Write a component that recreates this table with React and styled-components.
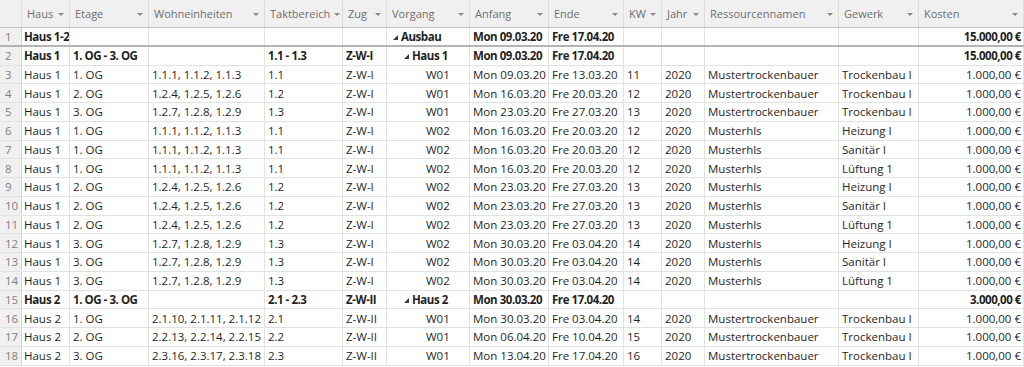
import React from "react";
import styled, { createGlobalStyle, css } from "styled-components";

const GlobalStyle = createGlobalStyle`
  html, body {
    margin: 0;
    padding: 0;
    background: #fff;
    overflow: hidden;
  }
  body {
    font-family: "Open Sans", "Noto Sans", sans-serif;
  }
`;

const COLS = "22px 48px 79px 116px 78px 44px 83px 79px 75px 38px 43px 134px 80px 1fr";

const columns = [
  { key: "haus", title: "Haus", tight: true },
  { key: "etage", title: "Etage" },
  { key: "we", title: "Wohneinheiten" },
  { key: "takt", title: "Taktbereich" },
  { key: "zug", title: "Zug" },
  { key: "vorgang", title: "Vorgang" },
  { key: "anfang", title: "Anfang" },
  { key: "ende", title: "Ende" },
  { key: "kw", title: "KW" },
  { key: "jahr", title: "Jahr" },
  { key: "res", title: "Ressourcennamen" },
  { key: "gewerk", title: "Gewerk" },
  { key: "kosten", title: "Kosten", right: true },
];

const t = (haus, etage, we, takt, zug, nr, anfang, ende, kw, res, gewerk) => ({
  haus, etage, we, takt, zug,
  vorgang: nr, level: 2, anfang, ende, kw, jahr: "2020", res, gewerk,
  kosten: "1.000,00 €",
});

const rows = [
  { bold: true, summary: true, haus: "Haus 1-2", vorgang: "Ausbau", level: 0, group: true, anfang: "Mon 09.03.20", ende: "Fre 17.04.20", kosten: "15.000,00 €" },
  { bold: true, haus: "Haus 1", etage: "1. OG - 3. OG", takt: "1.1 - 1.3", zug: "Z-W-I", vorgang: "Haus 1", level: 1, group: true, anfang: "Mon 09.03.20", ende: "Fre 17.04.20", kosten: "15.000,00 €" },
  t("Haus 1", "1. OG", "1.1.1, 1.1.2, 1.1.3", "1.1", "Z-W-I", "W01", "Mon 09.03.20", "Fre 13.03.20", "11", "Mustertrockenbauer", "Trockenbau I"),
  t("Haus 1", "2. OG", "1.2.4, 1.2.5, 1.2.6", "1.2", "Z-W-I", "W01", "Mon 16.03.20", "Fre 20.03.20", "12", "Mustertrockenbauer", "Trockenbau I"),
  t("Haus 1", "3. OG", "1.2.7, 1.2.8, 1.2.9", "1.3", "Z-W-I", "W01", "Mon 23.03.20", "Fre 27.03.20", "13", "Mustertrockenbauer", "Trockenbau I"),
  t("Haus 1", "1. OG", "1.1.1, 1.1.2, 1.1.3", "1.1", "Z-W-I", "W02", "Mon 16.03.20", "Fre 20.03.20", "12", "Musterhls", "Heizung I"),
  t("Haus 1", "1. OG", "1.1.1, 1.1.2, 1.1.3", "1.1", "Z-W-I", "W02", "Mon 16.03.20", "Fre 20.03.20", "12", "Musterhls", "Sanitär I"),
  t("Haus 1", "1. OG", "1.1.1, 1.1.2, 1.1.3", "1.1", "Z-W-I", "W02", "Mon 16.03.20", "Fre 20.03.20", "12", "Musterhls", "Lüftung 1"),
  t("Haus 1", "2. OG", "1.2.4, 1.2.5, 1.2.6", "1.2", "Z-W-I", "W02", "Mon 23.03.20", "Fre 27.03.20", "13", "Musterhls", "Heizung I"),
  t("Haus 1", "2. OG", "1.2.4, 1.2.5, 1.2.6", "1.2", "Z-W-I", "W02", "Mon 23.03.20", "Fre 27.03.20", "13", "Musterhls", "Sanitär I"),
  t("Haus 1", "2. OG", "1.2.4, 1.2.5, 1.2.6", "1.2", "Z-W-I", "W02", "Mon 23.03.20", "Fre 27.03.20", "13", "Musterhls", "Lüftung 1"),
  t("Haus 1", "3. OG", "1.2.7, 1.2.8, 1.2.9", "1.3", "Z-W-I", "W02", "Mon 30.03.20", "Fre 03.04.20", "14", "Musterhls", "Heizung I"),
  t("Haus 1", "3. OG", "1.2.7, 1.2.8, 1.2.9", "1.3", "Z-W-I", "W02", "Mon 30.03.20", "Fre 03.04.20", "14", "Musterhls", "Sanitär I"),
  t("Haus 1", "3. OG", "1.2.7, 1.2.8, 1.2.9", "1.3", "Z-W-I", "W02", "Mon 30.03.20", "Fre 03.04.20", "14", "Musterhls", "Lüftung 1"),
  { bold: true, haus: "Haus 2", etage: "1. OG - 3. OG", takt: "2.1 - 2.3", zug: "Z-W-II", vorgang: "Haus 2", level: 1, group: true, anfang: "Mon 30.03.20", ende: "Fre 17.04.20", kosten: "3.000,00 €" },
  t("Haus 2", "1. OG", "2.1.10, 2.1.11, 2.1.12", "2.1", "Z-W-II", "W01", "Mon 30.03.20", "Fre 03.04.20", "14", "Mustertrockenbauer", "Trockenbau I"),
  t("Haus 2", "2. OG", "2.2.13, 2.2.14, 2.2.15", "2.2", "Z-W-II", "W01", "Mon 06.04.20", "Fre 10.04.20", "15", "Mustertrockenbauer", "Trockenbau I"),
  t("Haus 2", "3. OG", "2.3.16, 2.3.17, 2.3.18", "2.3", "Z-W-II", "W01", "Mon 13.04.20", "Fre 17.04.20", "16", "Mustertrockenbauer", "Trockenbau I"),
];

const Sheet = styled.div`
  width: 1024px;
  height: 367px;
  overflow: hidden;
  font-size: 11.5px;
  color: #1f1f1f;
`;

const HeaderRow = styled.div`
  display: grid;
  grid-template-columns: ${COLS};
  height: 28px;
  background: #f0f0f0;
  border-bottom: 1px solid #c4c4c4;
  box-sizing: border-box;
`;

const HeadCell = styled.div`
  display: flex;
  align-items: flex-end;
  justify-content: space-between;
  padding: 0 5px 6px 5px;
  border-right: 1px solid #dcdcdc;
  color: #6e6e6e;
  font-size: 11px;
  white-space: nowrap;
  overflow: hidden;
`;

const Arrow = styled.span`
  flex: none;
  width: 0;
  height: 0;
  margin: 0 0 5px 4px;
  border-left: 3px solid transparent;
  border-right: 3px solid transparent;
  border-top: 3px solid #8a8a8a;
`;

const Row = styled.div`
  display: grid;
  grid-template-columns: ${COLS};
  height: 18.75px;
  box-sizing: border-box;
  border-bottom: ${p => (p.$summary ? "2px solid #b4b4b4" : "1px solid #e1e1e1")};
`;

const Num = styled.div`
  background: #f0f0f0;
  color: #808080;
  padding-left: 5px;
  border-right: 1px solid #d4d4d4;
  display: flex;
  align-items: center;
`;

const Cell = styled.div`
  display: flex;
  align-items: center;
  padding: 0 ${p => (p.$tight ? "0 0 2px" : "3px")};
  border-right: 1px solid #e1e1e1;
  white-space: nowrap;
  overflow: hidden;
  ${p =>
    p.$bold &&
    css`
      font-weight: 700;
      letter-spacing: -0.45px;
    `}
  ${p =>
    p.$right &&
    css`
      justify-content: flex-end;
      padding-right: 2px;
    `}
`;

const Outline = styled.span`
  display: flex;
  align-items: center;
  padding-left: ${p => p.$level * 11 + (p.$group ? 3 : 14)}px;
`;

const Toggle = styled.svg`
  width: 5px;
  height: 5px;
  margin: 2px 3px 0 0;
  flex: none;
`;

const Task = ({ row }) => (
  <Outline $level={row.level} $group={row.group}>
    {row.group && (
      <Toggle viewBox="0 0 5 5">
        <polygon points="5,0 5,5 0,5" fill="#3a3a3a" />
      </Toggle>
    )}
    {row.vorgang}
  </Outline>
);

export default function App() {
  return (
    <>
      <GlobalStyle />
      <Sheet>
        <HeaderRow>
          <HeadCell />
          {columns.map(c => (
            <HeadCell key={c.key}>
              <span>{c.title}</span>
              <Arrow />
            </HeadCell>
          ))}
        </HeaderRow>
        {rows.map((r, i) => (
          <Row key={i} $summary={r.summary}>
            <Num>{i + 1}</Num>
            {columns.map(c => (
              <Cell key={c.key} $right={c.right} $tight={c.tight} $bold={r.bold}>
                {c.key === "vorgang" ? <Task row={r} /> : r[c.key] || ""}
              </Cell>
            ))}
          </Row>
        ))}
      </Sheet>
    </>
  );
}
